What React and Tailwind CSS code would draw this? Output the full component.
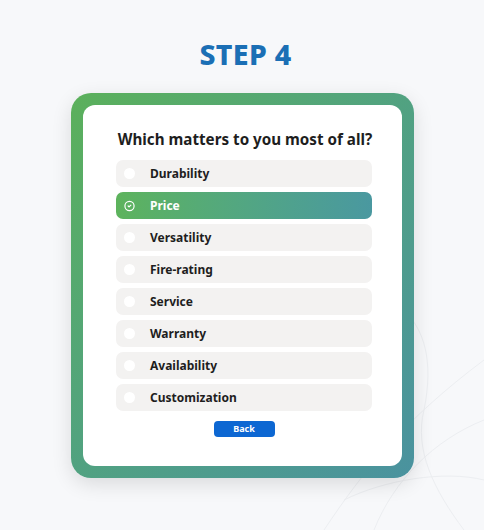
import React from "react";
import { CircleCheck } from "lucide-react";

const options = ["Durability","Price","Versatility","Fire-rating","Service","Warranty","Availability","Customization"];

export default function App() {
  return (
    <div className="relative w-[484px] h-[530px] overflow-hidden bg-[#f7f8fa]" style={{fontFamily: '"Noto Sans", sans-serif'}}>
      <svg className="absolute right-0 bottom-0" width="200" height="260" viewBox="0 0 200 260" fill="none" stroke="#eceef1" strokeWidth="1">
        <path d="M40 260 C 80 200, 120 150, 200 90" />
        <path d="M90 260 C 110 210, 150 170, 200 150" />
        <path d="M120 40 C 140 60, 150 90, 140 140 C 130 180, 150 220, 180 260" />
        <path d="M60 230 C 100 210, 160 200, 200 210" />
      </svg>
      <div className="relative flex flex-col items-center pt-[36px]">
        <h1 className="pl-[7px] text-[28.5px] leading-[36px] font-extrabold text-[#1b6fb5] tracking-[0.3px]">STEP 4</h1>
        <div className="mt-[21px] w-[343px] h-[385px] p-[12px] rounded-[20px] bg-gradient-to-br from-[#5bb05a] to-[#4a929f] shadow-[0_6px_20px_rgba(0,0,0,0.12)]">
          <div className="w-full h-full bg-white rounded-[12px] flex flex-col items-center pt-[22px] pl-[4px]">
            <p className="pl-[2px] text-[15.2px] leading-[24px] font-bold text-[#1e1e1e]">Which matters to you most of all?</p>
            <div className="mt-[9px] w-[256px] flex flex-col gap-[5px]">
              {options.map((o) => {
                const sel = o === "Price";
                return (
                  <div key={o} className={`h-[27px] rounded-[7px] flex items-center pl-[8px] ${sel ? "bg-gradient-to-r from-[#5db35c] to-[#4a98a0]" : "bg-[#f3f2f1]"}`}>
                    <div className="w-[11px] h-[11px] flex items-center justify-center">
                      {sel ? (
                        <CircleCheck size={12} strokeWidth={2.6} color="#ffffff" />
                      ) : (
                        <div className="w-[11px] h-[11px] rounded-full bg-white" />
                      )}
                    </div>
                    <span className={`ml-[15px] text-[12px] font-bold ${sel ? "text-white" : "text-[#1e1e1e]"}`}>{o}</span>
                  </div>
                );
              })}
            </div>
            <button className="mt-[10px] w-[61px] h-[16px] rounded-[4px] bg-[#0d67d2] text-white text-[9px] font-bold leading-[16px]">Back</button>
          </div>
        </div>
      </div>
    </div>
  );
}
